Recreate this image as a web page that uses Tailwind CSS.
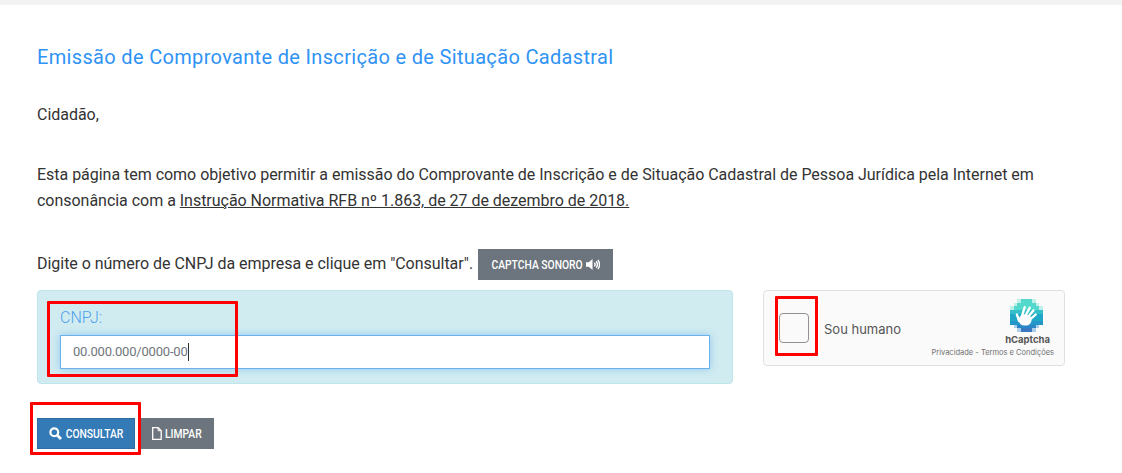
<!DOCTYPE html>
<html lang="pt-BR">

<head>
    <meta charset="UTF-8">
    <title>Emissão de Comprovante</title>
    <script src="https://cdn.jsdelivr.net/npm/@tailwindcss/browser@4"></script>
</head>

<body class="bg-white font-['Roboto',sans-serif] text-[#333] overflow-hidden">
    <div class="h-[5px] bg-[#f2f2f2]"></div>

    <div class="relative h-[468px] pl-[37px] pr-[57px] pt-[38px]">
        <h1 class="text-[20px] leading-[28px] tracking-[0.33px] text-[#2f93f5]">Emissão de Comprovante de Inscrição e de Situação Cadastral</h1>

        <p class="mt-[32px] text-[16px] leading-[24px] tracking-[-0.025px]">Cidadão,</p>

        <p class="mt-[35px] text-[16px] leading-[26px] tracking-[-0.025px]">Esta página tem como objetivo permitir a emissão do Comprovante de Inscrição e de Situação Cadastral de Pessoa Jurídica pela Internet em consonância com a <a class="underline">Instrução Normativa RFB nº 1.863, de 27 de dezembro de 2018.</a></p>

        <div class="mt-[35px] flex items-center gap-[5px] text-[16px] tracking-[-0.03px]">
            <span class="pb-[2px]">Digite o número de CNPJ da empresa e clique em "Consultar".</span>
            <button class="flex h-[31px] w-[135px] items-center justify-center gap-[3px] bg-[#6c757d] text-[12px] font-medium tracking-normal text-white">
                <span class="-mx-[7px] inline-block scale-x-[.86]">CAPTCHA SONORO</span>
                <svg class="h-[13px] w-[14px]" viewBox="0 0 15 13" fill="none" stroke="#fff">
                    <path d="M0 4h3l4-3.500v12L3 9H0z" fill="#fff" stroke="none" />
                    <path d="M9 4.500q1.500 2 0 4M11 3q2.500 3.500 0 7M12.800 1.500q3.500 5 0 10" stroke-width="1.500" />
                </svg>
            </button>
        </div>

        <div class="mt-[10px] flex gap-[30px]">
            <div class="h-[94px] w-[696px] rounded-[4px] border border-[#bee5eb] bg-[#d1ecf1] px-[22px] pt-[15px]">
                <label class="block text-[16px] font-light leading-[24px] text-[#4f9fea]">CNPJ:</label>
                <div class="mt-[5px] flex h-[34px] items-center border border-[#6cb0ec] bg-white pl-[12px] text-[13px] tracking-[-0.2px] text-[#6f767d] shadow-[0_0_8px_rgba(102,175,233,0.6)]">
                    <span>00.000.000/0000-00</span><span class="h-[18px] w-px bg-[#333]"></span>
                </div>
            </div>

            <div class="flex h-[76px] w-[302px] items-center rounded-[4px] border border-[#e0e0e0] bg-[#fafafa] font-['Inter',sans-serif]">
                <div class="ml-[15px] h-[30px] w-[30px] rounded-[4px] border border-[#919191] bg-[#fafafa]"></div>
                <span class="ml-[15px] pt-[3px] text-[13px] text-[#555]">Sou humano</span>
                <div class="ml-auto mr-[10px] flex flex-col items-end">
                    <svg class="mr-[11px] h-[33px] w-[33px]" viewBox="0 0 36 36">
                        <g shape-rendering="crispEdges">
                            <path fill="#bfefe9" d="M8 0h4v4H8zM24 0h4v4h-4zM4 4h4v4H4zM28 4h4v4h-4zM0 8h4v4H0zM32 8h4v4h-4z" />
                            <path fill="#52d9cc" d="M12 0h12v4H12zM8 4h20v4H8zM4 8h28v4H4z" />
                            <path fill="#32bfc8" d="M4 12h28v4H4zM0 12h4v4H0zM32 12h4v4h-4z" />
                            <path fill="#20a6c6" d="M0 16h36v8H0z" />
                            <path fill="#2296c8" d="M4 24h28v4H4zM0 24h4v4H0zM32 24h4v4h-4z" />
                            <path fill="#2b86c8" d="M8 28h20v4H8z" />
                            <path fill="#a9cdea" d="M4 28h4v4H4zM28 28h4v4h-4zM8 32h4v4H8zM24 32h4v4h-4z" />
                            <path fill="#3a78c2" d="M12 32h12v4H12z" />
                        </g>
                        <g fill="none" stroke="#fff" stroke-linecap="round">
                            <path d="M13 19 16 9M16.500 19l5-9.500M19.500 20l6-7.500M21.500 22.500l6.500-5.500M10 24 7.500 17" stroke-width="2.600" />
                            <path d="M15.500 23h2" stroke-width="12" />
                        </g>
                    </svg>
                    <span class="mr-[4px] mt-[1px] text-[9.500px] font-bold leading-[13px] text-[#555]">hCaptcha</span>
                    <span class="mt-[2px] text-[7.500px] leading-[10px] text-[#707070]">Privacidade - Termos e Condições</span>
                </div>
            </div>
        </div>

        <div class="mt-[34px] flex gap-[6px] text-[12px] font-medium text-white">
            <button class="flex h-[31px] w-[98px] items-center justify-center gap-[4px] border border-[#2e6da4] bg-[#337ab7]">
                <svg class="h-[13px] w-[13px]" viewBox="0 0 13 13" fill="none" stroke="#fff">
                    <circle cx="5.300" cy="5.300" r="3.900" stroke-width="2.200" />
                    <path d="M8.300 8.300 12 12" stroke-width="2.800" />
                </svg>
                <span class="-mx-[5px] inline-block scale-x-[.86]">CONSULTAR</span>
            </button>
            <button class="flex h-[31px] w-[73px] items-center justify-center gap-[3px] bg-[#6c757d] pr-[2px]">
                <svg class="h-[13px] w-[10px]" viewBox="0 0 10 13" fill="none" stroke="#fff">
                    <path d="M.700.700h5.500l3 3v8.600H.700z" stroke-width="1.300" />
                    <path d="M6 .700v3h3" />
                </svg>
                <span class="-mx-[3px] inline-block scale-x-[.86]">LIMPAR</span>
            </button>
        </div>

        <!-- marcacoes vermelhas por cima da tela -->
        <div class="pointer-events-none absolute left-[47px] top-[296px] h-[76px] w-[191px] rounded-[1px] border-[3px] border-[#f00]"></div>
        <div class="pointer-events-none absolute left-[775px] top-[291px] h-[60px] w-[43px] rounded-[1px] border-[3px] border-[#f00]"></div>
        <div class="pointer-events-none absolute left-[30px] top-[397px] h-[53px] w-[111px] rounded-[1px] border-[3px] border-[#f00]"></div>
    </div>
</body>

</html>
